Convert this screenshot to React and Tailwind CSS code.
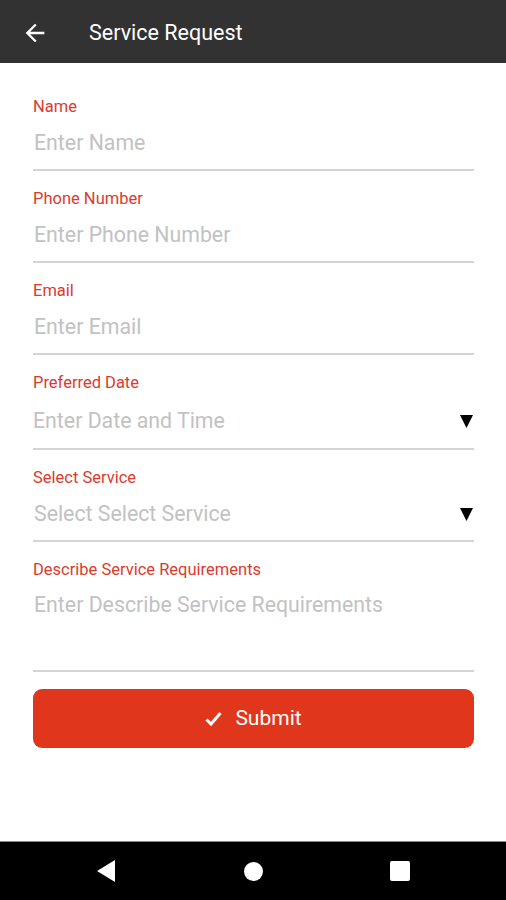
import React from 'react';

const fields = [
    { label: 'Name', placeholder: 'Enter Name' },
    { label: 'Phone Number', placeholder: 'Enter Phone Number' },
    { label: 'Email', placeholder: 'Enter Email' },
];

function TextField({ label, placeholder }) {
    return (
        <div className="mb-[18px]">
            <div className="h-5 text-[16.5px] leading-5 text-[#dc3a2e]">{label}</div>
            <div className="mt-[6px] h-10 pl-px text-[21.3px] leading-10 text-[#c2c2c2]">{placeholder}</div>
            <div className="mt-[6px] h-[2px] bg-[#d4d4d4]" />
        </div>
    );
}

function DropField({ label, placeholder, top, bottom, indent }) {
    return (
        <div className="mb-[18px]">
            <div className="h-5 text-[16.5px] leading-5 text-[#dc3a2e]">{label}</div>
            <div className={`flex h-10 items-center justify-between ${top} ${indent}`}>
                <span className="text-[21.3px] leading-10 text-[#c2c2c2]">{placeholder}</span>
                <svg className="mr-[1px] h-[13px] w-[13px]" viewBox="0 0 13 13">
                    <path d="M0 0h13L6.5 13z" fill="#000" />
                </svg>
            </div>
            <div className={`h-[2px] bg-[#d4d4d4] ${bottom}`} />
        </div>
    );
}

export default function App() {
    return (
        <div className="flex h-[900px] w-[506px] flex-col bg-white" style={{ fontFamily: 'Roboto, "Noto Sans", sans-serif' }}>
            <div className="flex h-[63px] shrink-0 items-center bg-[#323232] pt-[3px]">
                <svg className="ml-[21px] h-7 w-7" viewBox="0 0 24 24" fill="#fff">
                    <path d="M20 11H7.83l5.59-5.59L12 4l-8 8 8 8 1.41-1.41L7.83 13H20v-2z" />
                </svg>
                <span className="ml-[40px] text-[21.5px] text-white">Service Request</span>
            </div>

            <div className="flex-1 pl-[33px] pr-[32px] pt-[34px]">
                {fields.map(f => (
                    <TextField key={f.label} label={f.label} placeholder={f.placeholder} />
                ))}

                <DropField label="Preferred Date" placeholder="Enter Date and Time" top="mt-[8px]" bottom="mt-[7px]" indent="" />
                <DropField label="Select Service" placeholder="Select Select Service" top="mt-[6px]" bottom="mt-[6px]" indent="pl-px" />

                <div className="mb-[17px]">
                    <div className="h-5 text-[16.5px] leading-5 text-[#dc3a2e]">Describe Service Requirements</div>
                    <div className="mt-[5px] h-[85px] pl-px text-[21.3px] leading-10 text-[#c2c2c2]">Enter Describe Service Requirements</div>
                    <div className="h-[2px] bg-[#d4d4d4]" />
                </div>

                <button className="flex h-[59px] w-full items-center justify-center gap-[13px] rounded-[9px] bg-[#e0361b] text-white">
                    <svg className="h-[16px] w-[17px]" viewBox="0 0 17 16">
                        <path d="M1.5 8.5l4.5 4.5 9.5-11" fill="none" stroke="#fff" strokeWidth="3" />
                    </svg>
                    <span className="text-[21px]">Submit</span>
                </button>
            </div>

            <div className="flex h-[59px] shrink-0 items-center justify-center gap-[127px] border-t border-[#8a8a8a] bg-black">
                <div className="flex w-5 justify-center">
                    <svg className="h-[22px] w-[18px]" viewBox="0 0 18 22">
                        <path d="M18 0v22L0 11z" fill="#fff" />
                    </svg>
                </div>
                <div className="flex w-5 justify-center">
                    <div className="h-[19px] w-[19px] rounded-full bg-white" />
                </div>
                <div className="flex w-5 justify-center">
                    <div className="h-[20px] w-[20px] rounded-[2px] bg-white" />
                </div>
            </div>
        </div>
    );
}
